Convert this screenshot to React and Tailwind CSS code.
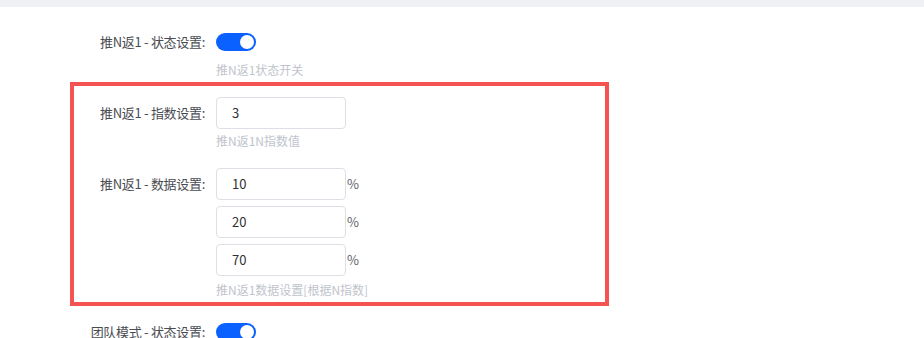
import React from "react";

const font = { fontFamily: '"Noto Sans CJK SC", "Noto Sans", sans-serif' };

function Toggle() {
  return (
    <span className="relative inline-block h-[18px] w-10 rounded-full bg-[#0b61ff]">
      <span className="absolute right-[2px] top-[2px] h-[14px] w-[14px] rounded-full bg-white" />
    </span>
  );
}

function Input({ value }) {
  return (
    <div className="flex h-8 w-[130px] items-center rounded-[4px] border border-[#dcdfe6] bg-white px-[15px] text-[13px] text-[#303133]">
      {value}
    </div>
  );
}

export default function App() {
  return (
    <div className="h-[338px] w-[924px] overflow-hidden bg-white" style={font}>
      <div className="h-[7px] bg-[#f0f1f5]" />
      {/* Row 1 */}
      <div className="mt-[19px] flex">
        <div className="w-[216px] pr-[11px] text-right text-[13px] leading-8 tracking-[-0.3px] text-[#4a4c52]">
          推N返1 - 状态设置:
        </div>
        <div>
          <div className="flex h-8 items-center">
            <Toggle />
          </div>
          <div className="mt-[2px] text-[12px] leading-5 text-[#c0c4cc]">推N返1状态开关</div>
        </div>
      </div>

      {/* Highlighted box */}
      <div className="ml-[70px] mt-[2px] w-[539px] border-4 border-[#f55252] pb-[2px] pt-[11px]">
        <div className="flex">
          <div className="w-[142px] pr-[11px] text-right text-[13px] leading-8 tracking-[-0.3px] text-[#4a4c52]">
            推N返1 - 指数设置:
          </div>
          <div>
            <Input value="3" />
            <div className="mt-[2px] text-[12px] leading-5 text-[#c0c4cc]">推N返1N指数值</div>
          </div>
        </div>
        <div className="mt-[17px] flex">
          <div className="w-[142px] pr-[11px] text-right text-[13px] leading-8 tracking-[-0.3px] text-[#4a4c52]">
            推N返1 - 数据设置:
          </div>
          <div>
            <div className="flex flex-col gap-[6px]">
              {["10", "20", "70"].map((v) => (
                <div key={v} className="flex items-start">
                  <Input value={v} />
                  <span className="ml-[1px] text-[13px] leading-8 text-[#606266]">%</span>
                </div>
              ))}
            </div>
            <div className="mt-[4px] text-[12px] leading-5 text-[#c0c4cc]">推N返1数据设置[根据N指数]</div>
          </div>
        </div>
      </div>

      {/* Row 4 */}
      <div className="mt-[10px] flex">
        <div className="w-[216px] pr-[11px] text-right text-[13px] leading-8 tracking-[-0.3px] text-[#4a4c52]">
          团队模式 - 状态设置:
        </div>
        <div className="flex h-8 items-center">
          <Toggle />
        </div>
      </div>
    </div>
  );
}
